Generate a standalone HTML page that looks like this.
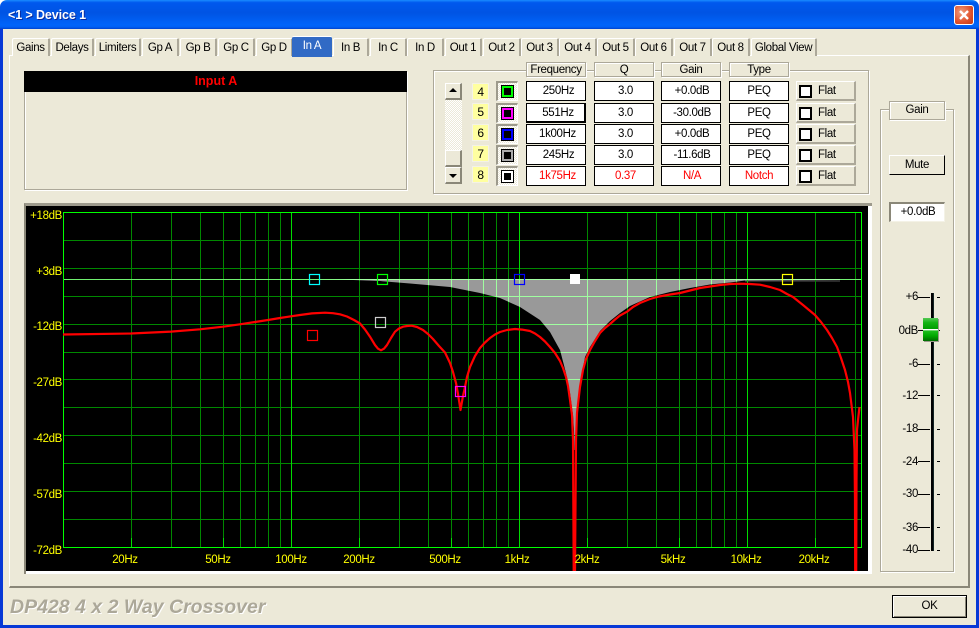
<!DOCTYPE html>
<html><head><meta charset="utf-8"><style>
html,body{margin:0;padding:0;background:#fff}
#w{position:relative;width:979px;height:628px;overflow:hidden;font:11.5px/13px "Liberation Sans",sans-serif;letter-spacing:-.35px;color:#000;background:#ece9d8;border-radius:7px 7px 0 0}
#w div{position:absolute;box-sizing:border-box;white-space:nowrap}
.tab{top:38px;height:18px;background:#ece9d8;border-top:1px solid #fff;border-left:1px solid #fff;border-right:2px solid #aca899;border-radius:2px 2px 0 0;text-align:center;line-height:18px}
.e{border:1px solid #aca899;box-shadow:inset 1px 1px 0 #fff,1px 1px 0 #fff}
.h{top:62px;height:15px;width:60px;background:#ece9d8;text-align:center;line-height:14px}
.b{height:20px;width:60px;background:#fff;border:1px solid #000;text-align:center;line-height:19px}
.r{color:#f00}
.n{left:472px;width:17px;height:17px;background:#ffffa0;border:1px solid #f4f2e6;text-align:center;line-height:16px;font-size:12px}
.s{left:496px;width:22px;height:20px;border-top:2px solid #9d9a8c;border-left:2px solid #9d9a8c;border-right:1px solid #fff;border-bottom:1px solid #fff;background:repeating-conic-gradient(#fff 0 25%,#ece9d8 0 50%) 0 0/2px 2px}
.s div{left:3px;top:2px;width:13px;height:13px;background:#000}
.s div div{left:1px;top:1px;width:11px;height:11px;background:#0f0}
.s div div div{left:2px;top:2px;width:7px;height:7px;background:#000}
.f{left:796px;width:60px;height:20px;background:#ece9d8;border-top:1px solid #fff;border-left:1px solid #fff;border-right:2px solid #aca899;border-bottom:2px solid #aca899;line-height:18px;padding-left:21px}
.f div{left:2px;top:3px;width:13px;height:13px;background:#fff;border:2px solid #000}
.sb{left:445px;width:17px;height:17px;background:#ece9d8;border-top:1px solid #fff;border-left:1px solid #fff;border-right:2px solid #8a8778;border-bottom:2px solid #8a8778}
.l{width:30px;left:888px;text-align:right;line-height:14px}
.k{background:#000;height:1px;left:918px;width:12px}
.k2{background:#000;height:1px;left:937px;width:3px}
</style></head><body><div id="w">
<div style="left:0;top:0;width:979px;height:29px;background:linear-gradient(180deg,#1a8cff 0,#0058ee 9%,#0054e4 45%,#0064fa 86%,#0060f4 93%,#0043cf 100%)"></div>
<div style="left:0;top:29px;width:3px;height:599px;background:#0738d6"></div>
<div style="left:976px;top:29px;width:3px;height:599px;background:#0738d6"></div>
<div style="left:0;top:625px;width:979px;height:3px;background:#0738d6"></div>
<div style="left:8px;top:8px;color:#fff;font-weight:bold;font-size:12.5px;letter-spacing:-.1px;line-height:15px;text-shadow:1px 1px 0 #0a2a9c">&lt;1 &gt; Device 1</div>
<div style="left:954px;top:5px;width:20px;height:20px;border:1px solid #fff;border-radius:3px;background:radial-gradient(circle at 35% 35%,#f0a080,#e0502a 60%,#c23a14)"><svg width="18" height="18" style="position:absolute;left:0;top:0"><path d="M5 5L13 13M13 5L5 13" stroke="#fff" stroke-width="2.4" fill="none"/></svg></div>

<div style="left:9px;top:55px;width:961px;height:533px;border-top:1px solid #fff;border-left:1px solid #fff;border-right:2px solid #8a8778;border-bottom:2px solid #8a8778"></div>
<div class="tab" style="left:12px;width:38px">Gains</div>
<div class="tab" style="left:51px;width:43px">Delays</div>
<div class="tab" style="left:95px;width:46px">Limiters</div>
<div class="tab" style="left:142px;width:37px">Gp A</div>
<div class="tab" style="left:180px;width:37px">Gp B</div>
<div class="tab" style="left:218px;width:37px">Gp C</div>
<div class="tab" style="left:256px;width:37px">Gp D</div>
<div style="left:292px;top:36px;width:40px;height:21px;background:#316ac5;color:#fff;border-top:1px solid #fff;text-align:center;line-height:18px;border-radius:2px 2px 0 0">In A</div>
<div class="tab" style="left:333px;width:36px">In B</div>
<div class="tab" style="left:370px;width:37px">In C</div>
<div class="tab" style="left:407px;width:37px">In D</div>
<div class="tab" style="left:445px;width:37px">Out 1</div>
<div class="tab" style="left:483px;width:38px">Out 2</div>
<div class="tab" style="left:521px;width:38px">Out 3</div>
<div class="tab" style="left:559px;width:38px">Out 4</div>
<div class="tab" style="left:597px;width:38px">Out 5</div>
<div class="tab" style="left:635px;width:38px">Out 6</div>
<div class="tab" style="left:674px;width:38px">Out 7</div>
<div class="tab" style="left:712px;width:38px">Out 8</div>
<div class="tab" style="left:751px;width:66px">Global View</div>

<div class="e" style="left:24px;top:71px;width:383px;height:119px"></div>
<div style="left:24px;top:71px;width:383px;height:21px;background:#000;color:#f00;font-weight:bold;font-size:12.5px;letter-spacing:0;text-align:center;line-height:20px;padding-left:1px">Input A</div>

<div class="e" style="left:433px;top:70px;width:436px;height:124px"></div>
<div class="h e" style="left:526px">Frequency</div>
<div class="h e" style="left:594px">Q</div>
<div class="h e" style="left:661px">Gain</div>
<div class="h e" style="left:729px">Type</div>

<div class="sb" style="top:83px"><svg width="14" height="14" style="position:absolute;left:0;top:0"><path d="M7 4L3 8H11Z" fill="#000"/></svg></div>
<div style="left:445px;top:100px;width:17px;height:50px;background:repeating-conic-gradient(#fff 0 25%,#ece9d8 0 50%) 0 0/2px 2px"></div>
<div class="sb" style="top:150px"></div>
<div class="sb" style="top:167px"><svg width="14" height="14" style="position:absolute;left:0;top:0"><path d="M3 6H11L7 10Z" fill="#000"/></svg></div>

<div class="n" style="top:83px">4</div><div class="n" style="top:103px">5</div><div class="n" style="top:124px">6</div><div class="n" style="top:145px">7</div><div class="n" style="top:166px">8</div>

<div class="s" style="top:81px"><div><div style="background:#0f0"><div></div></div></div></div>
<div class="s" style="top:103px"><div><div style="background:#f0f"><div></div></div></div></div>
<div class="s" style="top:124px"><div><div style="background:#00f"><div></div></div></div></div>
<div class="s" style="top:145px"><div><div style="background:#aaa"><div></div></div></div></div>
<div class="s" style="top:166px"><div><div style="background:#fff"><div></div></div></div></div>

<div class="b" style="left:526px;top:81px;padding-left:5px">250Hz</div><div class="b" style="left:594px;top:81px;padding-left:3px">3.0</div><div class="b" style="left:661px;top:81px;padding-left:2px">+0.0dB</div><div class="b" style="left:729px;top:81px">PEQ</div><div class="f" style="top:81px"><div></div>Flat</div>
<div class="b" style="left:526px;top:103px;padding-left:5px;border-right-width:2px;border-bottom-width:2px">551Hz</div><div class="b" style="left:594px;top:103px;padding-left:3px">3.0</div><div class="b" style="left:661px;top:103px;padding-left:2px">-30.0dB</div><div class="b" style="left:729px;top:103px">PEQ</div><div class="f" style="top:103px"><div></div>Flat</div>
<div class="b" style="left:526px;top:124px;padding-left:3px">1k00Hz</div><div class="b" style="left:594px;top:124px;padding-left:3px">3.0</div><div class="b" style="left:661px;top:124px;padding-left:2px">+0.0dB</div><div class="b" style="left:729px;top:124px">PEQ</div><div class="f" style="top:124px"><div></div>Flat</div>
<div class="b" style="left:526px;top:145px;padding-left:5px">245Hz</div><div class="b" style="left:594px;top:145px;padding-left:3px">3.0</div><div class="b" style="left:661px;top:145px;padding-left:2px">-11.6dB</div><div class="b" style="left:729px;top:145px">PEQ</div><div class="f" style="top:145px"><div></div>Flat</div>
<div class="b r" style="left:526px;top:166px;padding-left:3px">1k75Hz</div><div class="b r" style="left:594px;top:166px;padding-left:3px">0.37</div><div class="b r" style="left:661px;top:166px;padding-left:2px">N/A</div><div class="b r" style="left:729px;top:166px">Notch</div><div class="f" style="top:166px"><div></div>Flat</div>

<div style="left:24px;top:203px;width:848px;height:371px;background:#fff;border-top:3px solid #9d9a8c;border-left:2px solid #8a8778"></div>
<svg width="979" height="628" style="position:absolute;left:0;top:0" font-family="Liberation Sans" font-size="11.5" letter-spacing="-.35">
<defs><clipPath id="cg"><path d="M300 279H840V280L745 280.5 730 282.5 710 284.5 690 288 670 292 650 297 630 306 620 313 610 321 600 331 590 347 585 357 580 385 577 410 576 430 575 450 574.5 450 574 430 573 415 570 393 566 373 560 350 550 332 540 320 520 307 500 298 480 293 450 287 410 283.5 380 281 340 279.5Z"/></clipPath></defs>
<rect x="26" y="206" width="842" height="365" fill="#000"/>
<path d="M300 279H840V280L745 280.5 730 282.5 710 284.5 690 288 670 292 650 297 630 306 620 313 610 321 600 331 590 347 585 357 580 385 577 410 576 430 575 450 574.5 450 574 430 573 415 570 393 566 373 560 350 550 332 540 320 520 307 500 298 480 293 450 287 410 283.5 380 281 340 279.5Z" fill="#999"/>
<path d="M745 281H840" stroke="#555" stroke-width="1"/>
<g fill="none" stroke-width="1">
<path stroke="#008800" d="M131.5 212V547M171.5 212V547M200.5 212V547M223.5 212V547M240.5 212V547M255.5 212V547M268.5 212V547M280.5 212V547M359.5 212V547M399.5 212V547M428.5 212V547M451.5 212V547M468.5 212V547M483.5 212V547M496.5 212V547M508.5 212V547M587.5 212V547M627.5 212V547M656.5 212V547M679.5 212V547M696.5 212V547M711.5 212V547M724.5 212V547M736.5 212V547M815.5 212V547M855.5 212V547M63 240.5H861M63 268.5H861M63 296.5H861M63 324.5H861M63 352.5H861M63 379.5H861M63 407.5H861M63 435.5H861M63 463.5H861M63 491.5H861M63 519.5H861"/>
<path stroke="#00dc00" d="M291.5 212V547M519.5 212V547M747.5 212V547M131.5 538V547M223.5 538V547M359.5 538V547M451.5 538V547M587.5 538V547M679.5 538V547M815.5 538V547"/>
<path stroke="#70f070" d="M63 279.5H861"/>
<path stroke="#00ff00" d="M63.5 212.5H861.5V547.5H63.5Z"/>
<path clip-path="url(#cg)" stroke="#a0ffa0" d="M359.5 212V547M399.5 212V547M428.5 212V547M451.5 212V547M468.5 212V547M483.5 212V547M496.5 212V547M508.5 212V547M519.5 212V547M587.5 212V547M627.5 212V547M656.5 212V547M679.5 212V547M696.5 212V547M711.5 212V547M724.5 212V547M736.5 212V547M63 279.5H861M63 296.5H861M63 324.5H861M63 352.5H861M63 379.5H861M63 407.5H861"/>
</g>
<path fill="none" stroke="#f00" stroke-width="2.2" stroke-linejoin="round" stroke-linecap="butt" d="M63 334.5L131 333.5 171 331.6 200 329.3 223 326.7 240 324.3 255 322 268 320 280 318 291 316.3 300 315 312 313.4 325 312.7 333 313.2 340 314.3 347 316.5 354 320 360 323.5 365 329.5 370 336.7 375 345 378 348.7 381 350.3 384 348.7 387 345 391 338 395 331.7 399 328.5 403 326.7 407 326 411.7 325.7 417 327 423 330 428 334 433 339 439 346 445 352.5 450 363 453 372 456 383 458 394 460.5 410 463 396 465 387 467 377 470 367 475 356 480 348 485 342.5 490 338 495 334.5 500 332 507 330 515 329 522 329.6 530 331 535 333.5 540 337 545 341.5 550 347 555 353 560 361 563 368 566 377 568 386 570 400 572 415 573 440 573.7 571M575 571L576 440 577 413 580 387 583 370 586 359 590 350 595 341 600 333 605 328 610 324 615 319.5 620 315.5 627 311.7 633 307 640 303 650 299 659 296.5 670 294.5 680 293 690 290.5 700 288 710 286.5 720 285 730 284 740 283.7 750 284 760 284.7 770 287 780 290 787 294 793 297 803 305 809 310 815 315 821 322 827 330 832 338 837 347 841 358 845 370 848 382 850 393 853 417 854.5 450 855 500 855.2 571M856.2 571L856.5 480 857 430 858 420 859.5 407"/>
<g fill="none" stroke-width="1.2">
<rect x="309.5" y="274.5" width="10" height="10" stroke="#0ff"/>
<rect x="377.5" y="274.5" width="10" height="10" stroke="#0f0"/>
<rect x="514.5" y="274.5" width="10" height="10" stroke="#00f"/>
<rect x="782.5" y="274.5" width="10" height="10" stroke="#ff0"/>
<rect x="307.5" y="330.5" width="10" height="10" stroke="#f00"/>
<rect x="375.5" y="317.5" width="10" height="10" stroke="#ccc"/>
<rect x="455.5" y="386.5" width="10" height="10" stroke="#f0f"/>
</g>
<rect x="570" y="274" width="10" height="10" fill="#fff"/>
<g fill="#ff0" text-anchor="end">
<text x="62" y="219">+18dB</text><text x="62" y="275">+3dB</text><text x="62" y="330">-12dB</text><text x="62" y="386">-27dB</text><text x="62" y="442">-42dB</text><text x="62" y="498">-57dB</text><text x="62" y="554">-72dB</text>
</g>
<g fill="#ff0" text-anchor="middle">
<text x="125" y="563">20Hz</text><text x="218" y="563">50Hz</text><text x="291" y="563">100Hz</text><text x="359" y="563">200Hz</text><text x="445" y="563">500Hz</text><text x="517" y="563">1kHz</text><text x="587" y="563">2kHz</text><text x="673" y="563">5kHz</text><text x="746" y="563">10kHz</text><text x="814" y="563">20kHz</text>
</g>
</svg>

<div class="e" style="left:880px;top:109px;width:74px;height:463px"></div>
<div class="h e" style="left:889px;top:101px;width:56px;height:19px;line-height:17px">Gain</div>
<div style="left:889px;top:155px;width:56px;height:20px;background:#ece9d8;border-top:1px solid #fff;border-left:1px solid #fff;border-right:1px solid #000;border-bottom:1px solid #000;text-align:center;line-height:18px">Mute</div>
<div style="left:889px;top:202px;width:56px;height:20px;background:#fff;border-top:2px solid #8a8778;border-left:2px solid #8a8778;border-right:1px solid #f4f2e6;border-bottom:1px solid #f4f2e6;text-align:center;line-height:16px;padding-left:1px">+0.0dB</div>

<div style="left:931px;top:293px;width:3px;height:258px;background:linear-gradient(90deg,#000,#000 66%,#244)"></div>
<div class="l" style="top:290px">+6</div><div class="k" style="top:297px"></div><div class="k2" style="top:297px"></div>
<div class="l" style="top:324px">0dB</div><div class="k" style="top:330px"></div><div class="k2" style="top:330px"></div>
<div class="l" style="top:357px">-6</div><div class="k" style="top:364px"></div><div class="k2" style="top:364px"></div>
<div class="l" style="top:389px">-12</div><div class="k" style="top:395px"></div><div class="k2" style="top:395px"></div>
<div class="l" style="top:422px">-18</div><div class="k" style="top:429px"></div><div class="k2" style="top:429px"></div>
<div class="l" style="top:455px">-24</div><div class="k" style="top:461px"></div><div class="k2" style="top:461px"></div>
<div class="l" style="top:487px">-30</div><div class="k" style="top:494px"></div><div class="k2" style="top:494px"></div>
<div class="l" style="top:521px">-36</div><div class="k" style="top:527px"></div><div class="k2" style="top:527px"></div>
<div class="l" style="top:543px">-40</div><div class="k" style="top:550px"></div><div class="k2" style="top:550px"></div>
<div style="left:924px;top:319px;width:15px;height:23px;background:#9d9a8c"></div>
<div style="left:923px;top:318px;width:15px;height:23px;background:linear-gradient(180deg,#55c855 0,#14b414 20%,#009c00 48%,#fff 48%,#fff 53%,#20c020 54%,#00a800 78%,#006a00 100%)"></div>

<div style="left:892px;top:595px;width:75px;height:23px;background:#ece9d8;border:1px solid #000;box-shadow:inset 1px 1px 0 #fff,inset -1px -1px 0 #8a8778;text-align:center;line-height:21px">OK</div>
<div style="left:10px;top:595px;color:#aca899;font-weight:bold;font-style:italic;font-size:19.5px;letter-spacing:0;line-height:24px;text-shadow:1px 1px 0 #fff">DP428 4 x 2 Way Crossover</div>
</div></body></html>
